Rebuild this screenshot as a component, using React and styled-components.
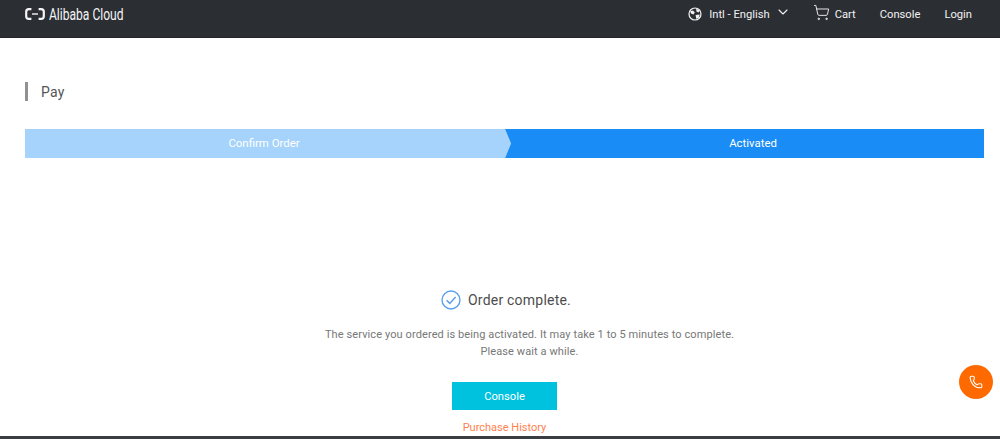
import React from "react";
import styled, { createGlobalStyle } from "styled-components";
import { ChevronDown, ShoppingCart, Phone } from "lucide-react";

const GlobalStyle = createGlobalStyle`
  html, body {
    margin: 0;
    padding: 0;
    background: #fff;
    font-family: Roboto, "Liberation Sans", sans-serif;
  }
  * {
    box-sizing: border-box;
  }
`;

const Page = styled.div`
  position: relative;
  display: flex;
  flex-direction: column;
  width: 1000px;
  height: 439px;
  overflow: hidden;
`;

const Header = styled.header`
  display: flex;
  align-items: center;
  justify-content: space-between;
  flex: none;
  height: 38px;
  padding: 0 28px 9px 25px;
  background: #2b2e33;
  border-bottom: 1px solid #24262a;
  color: #f2f2f2;
`;

const Logo = styled.div`
  display: flex;
  align-items: center;
  gap: 4px;
`;

const LogoText = styled.span`
  display: inline-block;
  font-size: 17px;
  line-height: 20px;
  color: #f4f4f4;
  transform: scaleX(0.71);
  transform-origin: left center;
`;

const Nav = styled.nav`
  display: flex;
  align-items: center;
  font-size: 11.2px;
`;

const NavItem = styled.span`
  display: flex;
  align-items: center;
  gap: ${(p) => p.$gap || 0}px;
  margin-left: ${(p) => p.$left || 0}px;
`;

const Main = styled.main`
  flex: 1;
  display: flex;
  flex-direction: column;
  padding: 44px 16px 0 25px;
`;

const Title = styled.h1`
  height: 19px;
  margin: 0;
  padding-left: 13px;
  border-left: 3px solid #919191;
  font-size: 14px;
  font-weight: 400;
  line-height: 20px;
  letter-spacing: 0.3px;
  color: #555;
`;

const Steps = styled.div`
  display: flex;
  height: 29px;
  margin-top: 28px;
`;

const Step = styled.div`
  display: flex;
  align-items: center;
  justify-content: center;
  font-size: 11.4px;
  color: #fff;
  background: ${(p) => (p.$active ? "#1a8cf5" : "#a5d3fb")};
  flex: ${(p) => (p.$active ? "0 0 479px" : "0 0 486px")};
  margin-left: ${(p) => (p.$active ? "-6px" : "0")};
  padding: ${(p) => (p.$active ? "0 0 1px 17px" : "0 8px 1px 0")};
  clip-path: ${(p) =>
    p.$active
      ? "polygon(0 0, 100% 0, 100% 100%, 0 100%, 6px 50%)"
      : "polygon(0 0, calc(100% - 6px) 0, 100% 50%, calc(100% - 6px) 100%, 0 100%)"};
`;

const Result = styled.section`
  display: flex;
  flex-direction: column;
  align-items: center;
  width: 959px;
  margin-top: 132px;
`;

const ResultTitle = styled.div`
  display: flex;
  align-items: center;
  gap: 7px;
  height: 20px;
  margin-left: 3px;
  font-size: 14px;
  letter-spacing: 0.22px;
  color: #4d4d4d;
`;

const Message = styled.p`
  margin: 16px 0 0 50px;
  font-size: 11px;
  line-height: 17px;
  text-align: center;
  letter-spacing: 0.1px;
  color: #777;
`;

const ConsoleButton = styled.button`
  width: 105px;
  height: 28px;
  margin-top: 22px;
  padding: 1px 0 0;
  border: 0;
  background: #00c1de;
  color: #fff;
  font-family: inherit;
  font-size: 11.2px;
`;

const HistoryLink = styled.a`
  margin-top: 11px;
  font-size: 11px;
  line-height: 14px;
  color: #ff7f50;
`;

const BottomStrip = styled.div`
  flex: none;
  height: 3px;
  background: #3a3d42;
`;

const CallButton = styled.div`
  position: absolute;
  right: 7px;
  top: 365px;
  display: flex;
  align-items: center;
  justify-content: center;
  width: 34px;
  height: 34px;
  border-radius: 50%;
  background: #ff6a00;
  color: #fff;
`;

const LangChevron = styled(ChevronDown)`
  margin: -5px 0 0 -2px;
`;

const CartIcon = styled(ShoppingCart)`
  margin-top: -3px;
`;

const LogoMark = () => (
  <svg width="20" height="12" viewBox="0 0 20 12" fill="none" stroke="#f4f4f4" strokeWidth="2.2">
    <path d="M6.4 1.2H3.8Q1.2 1.2 1.2 3.8V8.2Q1.2 10.8 3.8 10.8H6.4" />
    <path d="M13.6 1.2H16.2Q18.8 1.2 18.8 3.8V8.2Q18.8 10.8 16.2 10.8H13.6" />
    <path d="M7 6H13" strokeWidth="1.4" />
  </svg>
);

const GlobeIcon = () => (
  <svg width="14" height="14" viewBox="0 0 14 14" fill="none" stroke="#f2f2f2" strokeWidth="1.2">
    <circle cx="7" cy="7" r="6" />
    <path d="M2.2 4.2 5 3.4 6.8 5.4 5.4 7.6 3 6.6Z" fill="#f2f2f2" stroke="none" />
    <path d="M8.2 1.6 11.4 3.4 10.6 5.4 8.4 4.4Z" fill="#f2f2f2" stroke="none" />
    <path d="M7.6 8 11.8 7.6 10.6 11 8.2 11.8Z" fill="#f2f2f2" stroke="none" />
  </svg>
);

const CheckCircle = () => (
  <svg width="20" height="20" viewBox="0 0 20 20" fill="none" stroke="#5b9ff0">
    <circle cx="10" cy="10" r="9" strokeWidth="1.4" />
    <path d="M5.6 10.2 8.8 13.4 14.6 7" strokeWidth="1.5" />
  </svg>
);

export default function App() {
  return (
    <Page>
      <GlobalStyle />
      <Header>
        <Logo>
          <LogoMark />
          <LogoText>Alibaba Cloud</LogoText>
        </Logo>
        <Nav>
          <NavItem $gap={7}>
            <GlobeIcon />
            Intl - English
            <LangChevron size={16} strokeWidth={1.6} />
          </NavItem>
          <NavItem $left={22} $gap={5}>
            <CartIcon size={17} strokeWidth={1.3} />
            Cart
          </NavItem>
          <NavItem $left={24}>Console</NavItem>
          <NavItem $left={24}>Login</NavItem>
        </Nav>
      </Header>
      <Main>
        <Title>Pay</Title>
        <Steps>
          <Step>Confirm Order</Step>
          <Step $active>Activated</Step>
        </Steps>
        <Result>
          <ResultTitle>
            <CheckCircle />
            Order complete.
          </ResultTitle>
          <Message>
            The service you ordered is being activated. It may take 1 to 5 minutes to complete.
            <br />
            Please wait a while.
          </Message>
          <ConsoleButton>Console</ConsoleButton>
          <HistoryLink>Purchase History</HistoryLink>
        </Result>
      </Main>
      <BottomStrip />
      <CallButton>
        <Phone size={14} strokeWidth={1.8} />
      </CallButton>
    </Page>
  );
}
